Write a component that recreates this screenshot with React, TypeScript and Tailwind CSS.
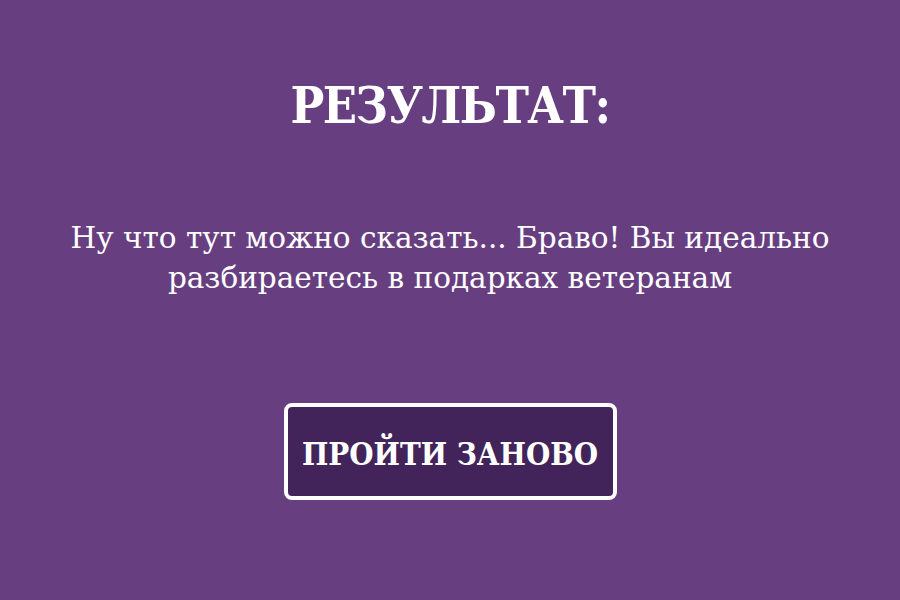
export default function App() {
  return (
    <div className="w-[900px] h-[600px] bg-[#673f81] flex flex-col items-center text-white font-['DejaVu_Serif',serif]">
      <h1 className="mt-[73px] text-[50px] leading-[66px] font-bold tracking-[-1.5px] font-['DejaVu_Serif_Condensed','DejaVu_Serif',serif]">
        РЕЗУЛЬТАТ:
      </h1>
      <p className="mt-[79px] w-[800px] text-center text-[29.5px] leading-[40px] font-light">
        Ну что тут можно сказать... Браво! Вы идеально разбираетесь в подарках ветеранам
      </p>
      <button className="mt-[105px] w-[333px] h-[97px] pt-[6px] rounded-[8px] border-4 border-white bg-[#42245a] text-[31px] font-bold font-['DejaVu_Serif_Condensed','DejaVu_Serif',serif]">
        ПРОЙТИ ЗАНОВО
      </button>
    </div>
  );
}
